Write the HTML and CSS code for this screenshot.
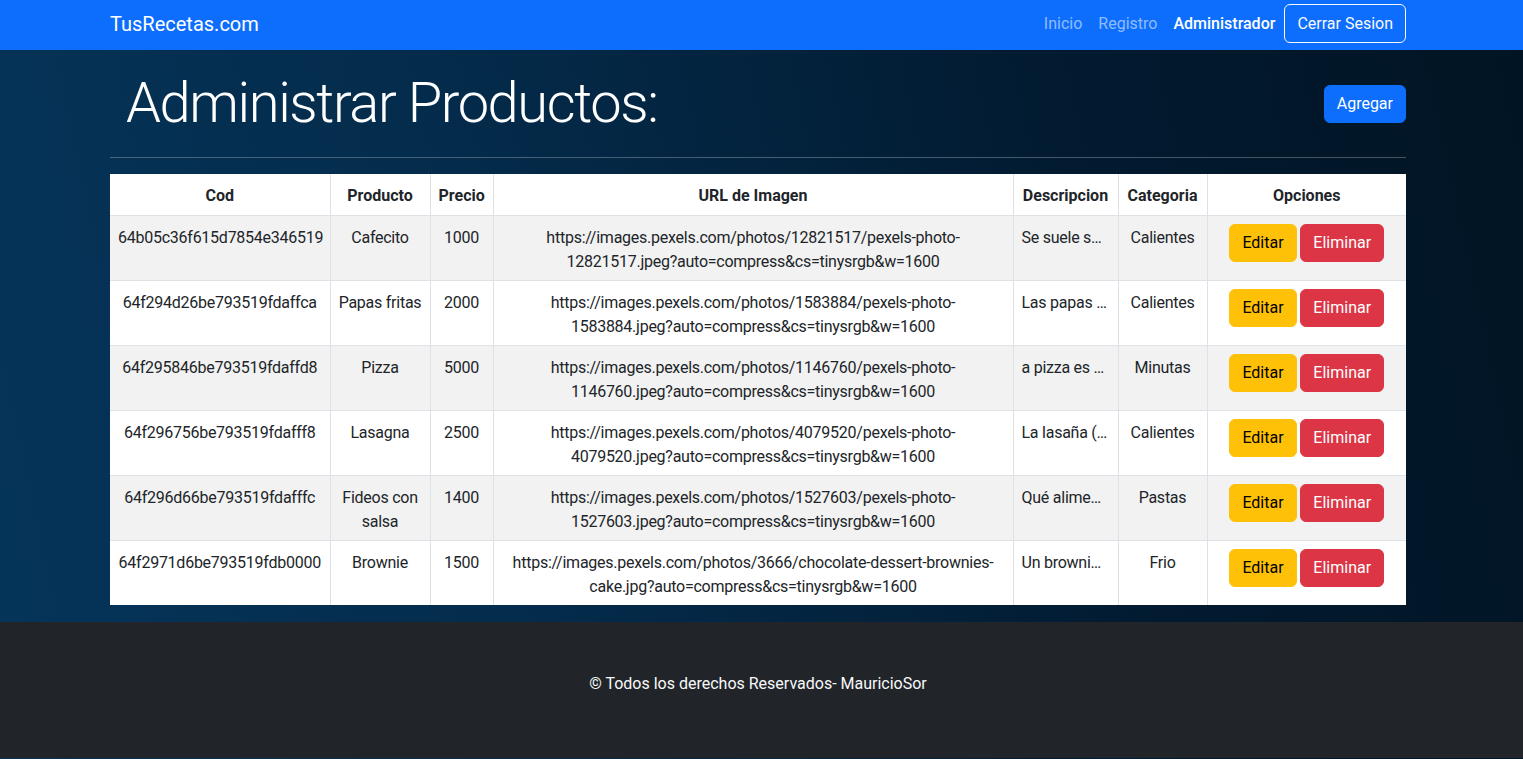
FILE: index.html
```html
<!DOCTYPE html>
<html lang="es">
<head>
<meta charset="utf-8">
<title>TusRecetas.com</title>
<link rel="stylesheet" href="styles.css">
</head>
<body>
<nav class="navbar">
  <div class="container nav-inner">
    <a class="brand" href="#">TusRecetas.com</a>
    <div class="nav-links">
      <a class="nav-link" href="#">Inicio</a>
      <a class="nav-link" href="#">Registro</a>
      <a class="nav-link active" href="#">Administrador</a>
      <button class="btn btn-outline-light">Cerrar Sesion</button>
    </div>
  </div>
</nav>
<main class="main">
  <div class="container">
    <div class="page-head">
      <h1 class="display">Administrar Productos:</h1>
      <button class="btn btn-primary">Agregar</button>
    </div>
    <hr class="divider">
    <table class="table">
      <colgroup>
        <col class="c-cod"><col class="c-prod"><col class="c-precio"><col class="c-url"><col class="c-desc"><col class="c-cat"><col class="c-opt">
      </colgroup>
      <thead>
        <tr><th>Cod</th><th>Producto</th><th>Precio</th><th>URL de Imagen</th><th>Descripcion</th><th>Categoria</th><th>Opciones</th></tr>
      </thead>
      <tbody>
        <tr>
          <td>64b05c36f615d7854e346519</td><td>Cafecito</td><td>1000</td>
          <td>https://images.pexels.com/photos/12821517/pexels-photo-12821517.jpeg?auto=compress&amp;cs=tinysrgb&amp;w=1600</td>
          <td class="desc">Se suele s…</td><td>Calientes</td>
          <td class="opts"><button class="btn btn-warning">Editar</button> <button class="btn btn-danger">Eliminar</button></td>
        </tr>
        <tr>
          <td>64f294d26be793519fdaffca</td><td>Papas fritas</td><td>2000</td>
          <td>https://images.pexels.com/photos/1583884/pexels-photo-1583884.jpeg?auto=compress&amp;cs=tinysrgb&amp;w=1600</td>
          <td class="desc">Las papas …</td><td>Calientes</td>
          <td class="opts"><button class="btn btn-warning">Editar</button> <button class="btn btn-danger">Eliminar</button></td>
        </tr>
        <tr>
          <td>64f295846be793519fdaffd8</td><td>Pizza</td><td>5000</td>
          <td>https://images.pexels.com/photos/1146760/pexels-photo-1146760.jpeg?auto=compress&amp;cs=tinysrgb&amp;w=1600</td>
          <td class="desc">a pizza es …</td><td>Minutas</td>
          <td class="opts"><button class="btn btn-warning">Editar</button> <button class="btn btn-danger">Eliminar</button></td>
        </tr>
        <tr>
          <td>64f296756be793519fdafff8</td><td>Lasagna</td><td>2500</td>
          <td>https://images.pexels.com/photos/4079520/pexels-photo-4079520.jpeg?auto=compress&amp;cs=tinysrgb&amp;w=1600</td>
          <td class="desc">La lasaña (…</td><td>Calientes</td>
          <td class="opts"><button class="btn btn-warning">Editar</button> <button class="btn btn-danger">Eliminar</button></td>
        </tr>
        <tr>
          <td>64f296d66be793519fdafffc</td><td>Fideos con salsa</td><td>1400</td>
          <td>https://images.pexels.com/photos/1527603/pexels-photo-1527603.jpeg?auto=compress&amp;cs=tinysrgb&amp;w=1600</td>
          <td class="desc">Qué alime…</td><td>Pastas</td>
          <td class="opts"><button class="btn btn-warning">Editar</button> <button class="btn btn-danger">Eliminar</button></td>
        </tr>
        <tr>
          <td>64f2971d6be793519fdb0000</td><td>Brownie</td><td>1500</td>
          <td>https://images.pexels.com/photos/3666/chocolate-dessert-brownies-cake.jpg?auto=compress&amp;cs=tinysrgb&amp;w=1600</td>
          <td class="desc">Un browni…</td><td>Frio</td>
          <td class="opts"><button class="btn btn-warning">Editar</button> <button class="btn btn-danger">Eliminar</button></td>
        </tr>
      </tbody>
    </table>
  </div>
</main>
<footer class="footer">
  <p class="footer-text">© Todos los derechos Reservados- MauricioSor</p>
</footer>
</body>
</html>
```
FILE: styles.css
```css
* { box-sizing: border-box; }
html, body { margin: 0; }
body {
  font-family: "Segoe UI", Roboto, "Noto Sans", sans-serif;
  font-size: 16px;
  line-height: 1.5;
  color: #212529;
  background: linear-gradient(78deg, #05355a 0%, #042b4b 35%, #021b31 70%, #011423 100%);
  min-height: 100vh;
}
.container {
  max-width: 1320px;
  margin: 0 auto;
  padding: 0 12px;
}
.navbar {
  background: #0d6efd;
  height: 50px;
  padding-right: 7px;
}
.nav-inner {
  display: flex;
  justify-content: space-between;
  align-items: center;
  height: 50px;
}
.brand {
  color: #fff;
  text-decoration: none;
  font-size: 20px;
  line-height: 30px;
  margin-top: -3px;
}
.nav-links {
  display: flex;
  align-items: center;
  margin-top: -3px;
}
.nav-link {
  color: rgba(255,255,255,.55);
  text-decoration: none;
  padding: 8px 8px;
  line-height: 24px;
}
.nav-link.active { color: #fff; font-weight: 500; }
.btn {
  font-family: inherit;
  font-size: 16px;
  line-height: 24px;
  padding: 6px 12px;
  border: 1px solid transparent;
  border-radius: 6px;
  cursor: pointer;
  display: inline-block;
}
.btn-outline-light {
  color: #f8f9fa;
  background: transparent;
  border-color: #f8f9fa;
  margin-left: 1px;
  padding: 7px 12px 6px;
}
.btn-primary { background: #0d6efd; border-color: #0d6efd; color: #fff; }
.btn-warning { background: #ffc107; border-color: #ffc107; color: #000; }
.btn-danger { background: #dc3545; border-color: #dc3545; color: #fff; }
.main { padding-right: 7px; padding-bottom: 17px; }
.page-head {
  display: flex;
  justify-content: space-between;
  align-items: center;
  padding-top: 20px;
}
.display {
  margin: 0;
  padding-left: 16px;
  font-size: 56px;
  font-weight: 300;
  line-height: 67px;
  letter-spacing: -1.4px;
  color: #fff;
}
.divider {
  margin: 20px 0 16px;
  border: 0;
  border-top: 1px solid rgba(222,226,230,.3);
}
.table {
  width: 100%;
  border-collapse: collapse;
  table-layout: fixed;
  background: #fff;
  margin: 0;
  letter-spacing: -0.25px;
}
.c-cod { width: 220px; }
.c-prod { width: 100px; }
.c-precio { width: 63px; }
.c-url { width: 520px; }
.c-desc { width: 105px; }
.c-cat { width: 89px; }
.c-opt { width: 199px; }
.table th, .table td {
  border: 1px solid #dee2e6;
  padding: 10px 8px 6px;
  text-align: center;
  vertical-align: top;
}
.table th { font-weight: 700; padding: 10px 8px 7px; letter-spacing: 0; }
.table td.opts { padding: 8px 8px 8px; }
.table thead th { border-top: 0; }
.table tr > :first-child { border-left: 0; }
.table tr > :last-child { border-right: 0; }
.table tbody tr:last-child td { border-bottom: 0; }
.table tbody tr:nth-child(odd) td { background: #f2f2f2; }
.table td.desc {
  text-align: left;
  white-space: nowrap;
}
.table .btn { letter-spacing: 0; }
.footer {
  background: #212529;
  padding: 50px 7px 46px 0;
}
.footer-text {
  margin: 0 0 16px;
  text-align: center;
  color: #f8f9fa;
}
```
